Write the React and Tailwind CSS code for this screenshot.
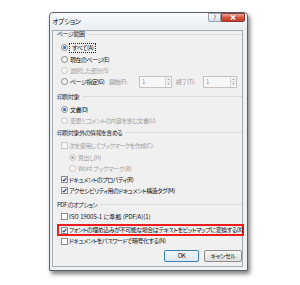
import React from "react";

const F = "[font-family:'Noto_Sans_CJK_JP','Noto_Sans',sans-serif] [font-feature-settings:'palt']";

function Radio({ checked, disabled }) {
  return (
    <span
      className={`w-[7px] h-[7px] rounded-full border shrink-0 flex items-center justify-center ${
        disabled ? "border-[#c8c8c8] bg-[#f5f5f5]" : "border-[#8a8a8a] bg-[#f3f3f3]"
      }`}
    >
      {checked ? (
        <span className={`w-[3px] h-[3px] rounded-full ${disabled ? "bg-[#a9a9a9]" : "bg-[#2d62b0]"}`} />
      ) : null}
    </span>
  );
}

function Check({ checked, disabled }) {
  return (
    <span
      className={`w-[7px] h-[7px] border shrink-0 flex items-center justify-center ${
        disabled ? "border-[#c8c8c8] bg-[#f5f5f5]" : "border-[#8a8a8a] bg-white"
      }`}
    >
      {checked ? (
        <svg width="5" height="5" viewBox="0 0 5 5">
          <path d="M0.6 2.6 L1.9 3.9 L4.4 0.8" fill="none" stroke="#2a3f85" strokeWidth="1.1" />
        </svg>
      ) : null}
    </span>
  );
}

function Header({ children, className }) {
  return (
    <div className={`flex items-center h-[11px] ${className || ""}`}>
      <span className="text-[#1e2a3a] whitespace-nowrap">{children}</span>
      <div className="flex-1 h-px bg-[#d5dee7] ml-[3px]" />
    </div>
  );
}

function Spin({ w }) {
  return (
    <div className={`${w} h-[12px] border border-[#c3c3c3] bg-[#f7f7f7] flex items-center shrink-0`}>
      <span className="flex-1 pl-[2px] text-[#9a9a9a] text-[6px] leading-none">1</span>
      <div className="w-[6px] h-full border-l border-[#d6d6d6] flex flex-col">
        <div className="flex-1 flex items-center justify-center border-b border-[#dedede]">
          <svg width="3" height="2" viewBox="0 0 3 2"><path d="M0 2 L1.5 0 L3 2Z" fill="#b0b0b0" /></svg>
        </div>
        <div className="flex-1 flex items-center justify-center">
          <svg width="3" height="2" viewBox="0 0 3 2"><path d="M0 0 L1.5 2 L3 0Z" fill="#b0b0b0" /></svg>
        </div>
      </div>
    </div>
  );
}

export default function App() {
  return (
    <div className={`w-[300px] h-[285px] bg-white overflow-hidden pt-[12px] pl-[49px] text-[6px] leading-[8px] tracking-[-0.45px] text-[#111] ${F}`}>
      <div className="w-[199px] h-[259px] border border-[#5b6068] rounded-t-[4px] bg-[#eef1f4] shadow-[2px_3px_4px_rgba(0,0,0,0.5)] flex flex-col">
        <div className="h-[17px] flex items-start shrink-0 bg-gradient-to-b from-[#f7f9fb] to-[#eaeef2] rounded-t-[4px]">
          <span className="pl-[2px] pt-[4px] text-[7px] leading-[8px] text-[#111]">オプション</span>
          <div className="flex-1" />
          <div className="w-[13px] h-[9px] border border-[#9aa3ad] rounded-bl-[2px] bg-gradient-to-b from-[#fdfdfd] to-[#d9dee4] flex items-center justify-center text-[6px] leading-none text-[#445]">
            ?
          </div>
          <div className="w-[24px] h-[9px] mr-[2px] border border-[#8a3a30] rounded-br-[2px] bg-gradient-to-b from-[#e9a898] via-[#d5543f] to-[#c63c27] flex items-center justify-center">
            <svg width="6" height="5" viewBox="0 0 6 5">
              <path d="M1 0.5 L5 4.5 M5 0.5 L1 4.5" stroke="#fff" strokeWidth="1.4" />
            </svg>
          </div>
        </div>
        <div className="flex-1 ml-[2px] mr-[4px] mb-[3px] border border-[#a4adb7] bg-[#f0f0f0] pl-[4px] flex flex-col">
          <div className="flex items-center h-[6px]">
            <span className="text-[#1e2a3a] whitespace-nowrap">ページ範囲</span>
            <div className="flex-1 h-px bg-[#d5dee7] ml-[3px]" />
          </div>
          <div className="mt-[5px] h-[11px] flex items-center pl-[4px]">
            <Radio checked />
            <span className="ml-[1px] px-[2px] border border-dotted border-[#222]">すべて(A)</span>
          </div>
          <div className="h-[11px] mt-[1px] flex items-center pl-[4px]">
            <Radio />
            <span className="ml-[2px]">現在のページ(E)</span>
          </div>
          <div className="h-[11px] flex items-center pl-[4px] text-[#a0a0a0]">
            <Radio disabled />
            <span className="ml-[2px]">選択した部分(S)</span>
          </div>
          <div className="h-[11px] flex items-center pl-[4px]">
            <Radio />
            <span className="ml-[2px] w-[39px] shrink-0 whitespace-nowrap">ページ指定(G)</span>
            <span className="w-[30px] shrink-0 text-[#9a9a9a] whitespace-nowrap">開始(F):</span>
            <Spin w="w-[33px]" />
            <span className="ml-[4px] w-[27px] shrink-0 text-[#9a9a9a] whitespace-nowrap">終了(T):</span>
            <Spin w="w-[34px]" />
          </div>
          <Header className="mt-[4px]">印刷対象</Header>
          <div className="mt-[2px] h-[11px] flex items-center pl-[4px]">
            <Radio checked />
            <span className="ml-[2px]">文書(D)</span>
          </div>
          <div className="h-[11px] flex items-center pl-[4px] text-[#a0a0a0]">
            <Radio disabled />
            <span className="ml-[2px]">変更とコメントの内容を含む文書(U)</span>
          </div>
          <Header className="mt-[1px]">印刷対象外の情報を含める</Header>
          <div className="mt-[2px] h-[11px] flex items-center pl-[4px] text-[#a0a0a0]">
            <Check disabled />
            <span className="ml-[1px]">次を使用してブックマークを作成(C):</span>
          </div>
          <div className="mt-[1px] h-[11px] flex items-center pl-[12px] text-[#a0a0a0]">
            <Radio checked disabled />
            <span className="ml-[2px]">見出し(H)</span>
          </div>
          <div className="h-[11px] flex items-center pl-[12px] text-[#a0a0a0]">
            <Radio disabled />
            <span className="ml-[2px] tracking-[-0.2px]">Word ブックマーク(B)</span>
          </div>
          <div className="h-[11px] flex items-center pl-[4px]">
            <Check checked />
            <span className="ml-[1px]">ドキュメントのプロパティ(R)</span>
          </div>
          <div className="h-[11px] flex items-center pl-[4px]">
            <Check checked />
            <span className="ml-[1px]">アクセシビリティ用のドキュメント構造タグ(M)</span>
          </div>
          <Header className="mt-[3px]">PDF のオプション</Header>
          <div className="mt-[1px] h-[11px] flex items-center pl-[4px]">
            <Check />
            <span className="ml-[1px] tracking-[0px]">ISO 19005-1 に準拠 (PDF/A)(1)</span>
          </div>
          <div className="mt-[2px] h-[12px] -mr-[2px] border-2 border-[#ee1c1c] flex items-center pl-[2px]">
            <Check checked />
            <span className="ml-[1px] whitespace-nowrap">フォントの埋め込みが不可能な場合はテキストをビットマップに変換する(X)</span>
          </div>
          <div className="h-[10px] flex items-center pl-[4px]">
            <Check />
            <span className="ml-[1px]">ドキュメントをパスワードで暗号化する(N)</span>
          </div>
          <div className="mt-[4px] flex justify-end gap-[5px]">
            <div className="w-[35px] h-[12px] border border-[#3c7fb1] rounded-[2px] bg-gradient-to-b from-[#f4f8fc] to-[#dbe6f1] flex items-center justify-center text-[6px] leading-none">
              OK
            </div>
            <div className="w-[38px] h-[12px] border border-[#8c8c8c] rounded-[2px] bg-gradient-to-b from-[#f6f6f6] to-[#dddddd] flex items-center justify-center text-[6px] leading-none">
              キャンセル
            </div>
          </div>
        </div>
      </div>
    </div>
  );
}
